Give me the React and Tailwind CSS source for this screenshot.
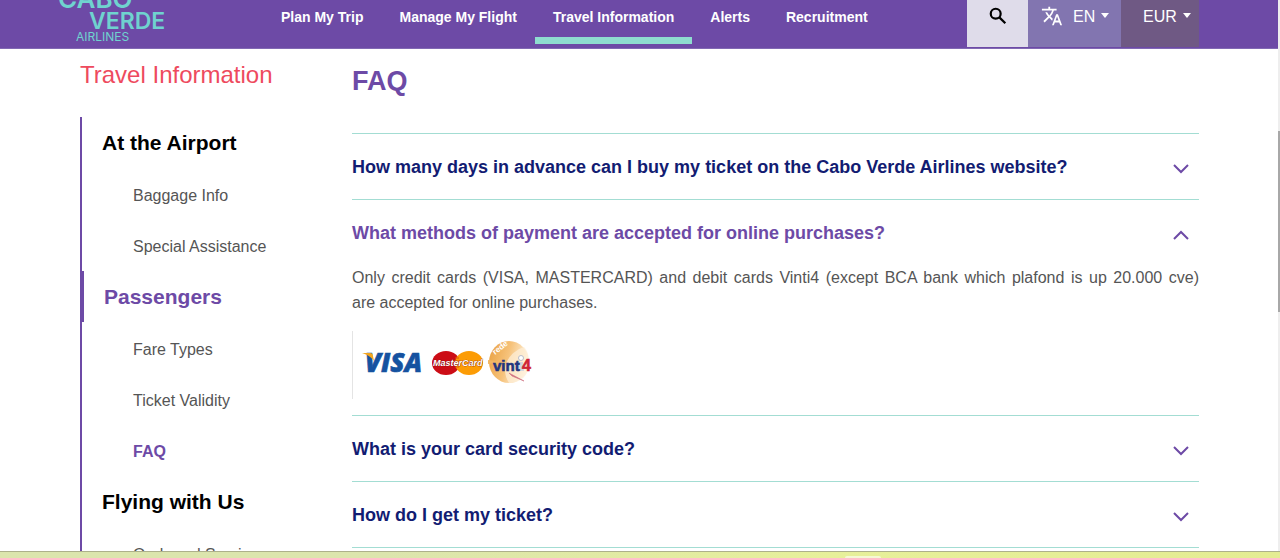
import { useState } from 'react';

const NAV_ITEMS = ['Plan My Trip', 'Manage My Flight', 'Travel Information', 'Alerts', 'Recruitment'];

const SECTIONS = [
  { title: 'At the Airport', links: ['Baggage Info', 'Special Assistance'] },
  { title: 'Passengers', links: ['Fare Types', 'Ticket Validity', 'FAQ'] },
  { title: 'Flying with Us', links: ['On-board Services'] },
];

const QUESTIONS = [
  'How many days in advance can I buy my ticket on the Cabo Verde Airlines website?',
  'What methods of payment are accepted for online purchases?',
  'What is your card security code?',
  'How do I get my ticket?',
];

function Logo() {
  return (
    <svg width="110" height="42" viewBox="0 0 110 42" className="block" role="img" aria-label="Cabo Verde Airlines" fill="#6fd3cf" fontFamily="Inter, sans-serif">
      <text x="0" y="8" fontSize="26" fontWeight="600">CABO</text>
      <text x="31" y="29" fontSize="23" fontWeight="600">VERDE</text>
      <text x="18" y="41" fontSize="12">AIRLINES</text>
    </svg>
  );
}

function Caret() {
  return (
    <svg width="8" height="5" viewBox="0 0 8 5" className="pointer-events-none -ml-2 mb-1 shrink-0" aria-hidden="true">
      <path d="M0 0h8L4 5z" fill="white" />
    </svg>
  );
}

function Header() {
  return (
    <header className="flex h-[49px] shrink-0 border-b border-[#8169b3] bg-[#6d4aa6] pr-[79px] pl-[58px]">
      <a href="#home" className="w-[205px] shrink-0">
        <Logo />
      </a>
      <nav className="flex flex-1">
        {NAV_ITEMS.map((item) => (
          <a
            key={item}
            href="#nav"
            className={`h-11 px-[18px] pt-[7px] text-sm leading-5 font-bold whitespace-nowrap text-white ${
              item === 'Travel Information' ? 'border-b-7 border-[#8edccf]' : ''
            }`}
          >
            {item}
          </a>
        ))}
      </nav>
      <div className="flex h-[47px] shrink-0 text-base text-white">
        <button type="button" aria-label="Search" className="flex w-[61px] items-start justify-center bg-[#dfdcea] pt-[5px]">
          <svg width="22" height="22" viewBox="0 0 24 24" fill="none" stroke="black" strokeWidth="2.4" aria-hidden="true">
            <circle cx="9.5" cy="9.5" r="5.4" />
            <path d="M13.5 13.5L20 20" />
          </svg>
        </button>
        <div className="flex w-[93px] items-start bg-[#8275b0] pt-[5px] pl-[13px]">
          <svg width="22" height="22" viewBox="0 0 24 24" fill="white" className="shrink-0" aria-hidden="true">
            <path d="M12.87 15.07l-2.54-2.51.03-.03A17.52 17.52 0 0 0 14.07 6H17V4h-7V2H8v2H1v1.99h11.17C11.5 7.92 10.44 9.75 9 11.35 8.07 10.32 7.3 9.19 6.69 8h-2c.73 1.63 1.73 3.17 2.98 4.56l-5.09 5.02L4 19l5-5 3.11 3.11.76-2.04zM18.5 10h-2L12 22h2l1.12-3h4.75L21 22h2l-4.5-12zm-2.62 7l1.62-4.33L19.12 17h-3.24z" />
          </svg>
          <div className="flex h-6 items-center pl-[10px]">
            <select aria-label="Language" className="w-9 appearance-none bg-transparent">
              <option>EN</option>
            </select>
            <Caret />
          </div>
        </div>
        <div className="flex w-[78px] items-start bg-[#6f5984] pt-[5px] pl-[22px]">
          <div className="flex h-6 items-center">
            <select aria-label="Currency" className="w-12 appearance-none bg-transparent">
              <option>EUR</option>
            </select>
            <Caret />
          </div>
        </div>
      </div>
    </header>
  );
}

function Sidebar() {
  return (
    <aside className="w-[272px] shrink-0">
      <h2 className="pt-3 text-2xl leading-7 text-[#ee4a5e]">Travel Information</h2>
      <nav className="mt-7 border-l-2 border-[#6d4aa6]">
        {SECTIONS.map(({ title, links }) => (
          <div key={title}>
            <h3
              className={`h-[51px] pl-5 text-[21px] leading-[51px] font-bold ${
                title === 'Passengers' ? 'border-l-2 border-[#6d4aa6] text-[#6d4aa6]' : 'text-black'
              }`}
            >
              {title}
            </h3>
            <ul className="pt-px">
              {links.map((link) => (
                <li key={link} className="h-[51px]">
                  <a
                    href="#page"
                    className={`block pl-[51px] text-base leading-[53px] ${
                      link === 'FAQ' ? 'font-bold text-[#6d4aa6]' : 'text-[#555555]'
                    }`}
                  >
                    {link}
                  </a>
                </li>
              ))}
            </ul>
          </div>
        ))}
      </nav>
    </aside>
  );
}

function PaymentCards() {
  return (
    <svg width="190" height="68" viewBox="0 0 190 68" className="block" role="img" aria-label="Visa, MasterCard, Vinti4" fontFamily="Liberation Sans, Arial, sans-serif">
      <defs>
        <linearGradient id="globe" x1="0" y1="0.3" x2="1" y2="0.6">
          <stop offset="0" stopColor="#eba548" />
          <stop offset="0.45" stopColor="#f6c27a" />
          <stop offset="0.8" stopColor="#fce6c4" />
          <stop offset="1" stopColor="#ffffff" />
        </linearGradient>
      </defs>
      <path d="M0.5 0v68" stroke="#e4e4e4" />
      <text x="13" y="41" fontFamily="Open Sans, sans-serif" fontSize="26" fontWeight="800" fontStyle="italic" fill="#1552a0" stroke="#1552a0" strokeWidth="0.6">VISA</text>
      <path d="M10 22h8c2 0 3 1 3 3l1 5c-3-4-6-6-12-8z" fill="#f3a51d" />
      <ellipse cx="94" cy="32" rx="14" ry="12" fill="#cc0d16" />
      <ellipse cx="117" cy="32" rx="14" ry="12" fill="#fc9c05" />
      <path d="M103 27h4M102 30h6M102 33h6M103 36h4" stroke="#e0530e" />
      <text x="81" y="35" fontSize="9" fontWeight="700" fontStyle="italic" fill="white" stroke="#7c1410" strokeWidth="0.6" paintOrder="stroke">MasterCard</text>
      <ellipse cx="157" cy="31" rx="20" ry="21" fill="url(#globe)" />
      <path d="M157 52c-9-14-2-30 15-36 5 5 6 15 4 23-2 7-9 13-19 13z" fill="#fdeed6" opacity="0.75" />
      <path d="M136 29l14 2-14 2z" fill="#f1b765" />
      <text x="143" y="24" fontSize="8" fontWeight="700" fill="white" transform="rotate(-38 143 24)">rede</text>
      <path d="M166 31h5l1 9h-8z" fill="#d4d5dd" />
      <circle cx="169" cy="27" r="2.5" fill="#ffffff" stroke="#b9bcc9" />
      <text x="141" y="40" fontSize="15" fontWeight="700" fill="#22357e" stroke="#22357e" strokeWidth="0.6">vint</text>
      <text x="170" y="40" fontSize="16" fontWeight="700" fill="#cf2435" stroke="#cf2435" strokeWidth="0.6">4</text>
      <path d="M157 42l15 8-12-5z" fill="#cf7080" stroke="#cf7080" strokeWidth="0.6" />
    </svg>
  );
}

function Chevron({ up }) {
  return (
    <svg width="16" height="10" viewBox="0 0 16 10" className={`mt-1 mr-[10px] shrink-0 ${up ? 'rotate-180' : ''}`} fill="none" stroke="#6d4aa6" strokeWidth="2" aria-hidden="true">
      <path d="M1 1l7 7 7-7" />
    </svg>
  );
}

export default function App() {
  const [open, setOpen] = useState(1);

  return (
    <div className="flex h-screen flex-col overflow-hidden bg-white font-['Liberation_Sans',Arial,sans-serif]">
      <div className="flex min-h-0 flex-1">
        <div className="flex min-w-0 flex-1 flex-col">
          <Header />
          <div className="flex min-h-0 flex-1 overflow-hidden pr-[79px] pl-20">
            <Sidebar />
            <main className="min-w-0 flex-1">
              <h1 className="pt-4 pb-9 text-[27px] leading-8 font-bold text-[#6d4aa6]">FAQ</h1>
              {QUESTIONS.map((question, i) => (
                <section key={question} className="border-t border-[#a3ddd3] last:border-b">
                  <h2>
                    <button
                      type="button"
                      aria-expanded={open === i}
                      onClick={() => setOpen(open === i ? -1 : i)}
                      className={`flex h-[65px] w-full items-center justify-between text-left text-lg font-bold ${
                        open === i ? 'text-[#6d4aa6]' : 'text-[#121c72]'
                      }`}
                    >
                      {question}
                      <Chevron up={open === i} />
                    </button>
                  </h2>
                  {open === i && (
                    <div className="pb-4 text-base leading-[25px] text-[#555555]">
                      <p>
                        <span className="block [text-align-last:justify]">
                          Only credit cards (VISA, MASTERCARD) and debit cards Vinti4 (except BCA bank which plafond is up 20.000 cve)
                        </span>
                        are accepted for online purchases.
                      </p>
                      <div className="mt-4">
                        <PaymentCards />
                      </div>
                    </div>
                  )}
                </section>
              ))}
            </main>
          </div>
        </div>
        <div className="w-[2px] shrink-0 bg-[#eeeeee] pt-[131px]">
          <div className="h-[181px] bg-[#a8a8a8]" />
        </div>
      </div>
      <footer className="h-[7px] shrink-0 border-t border-[#adb08b] bg-linear-to-r from-[#dce5ad] from-30% via-[#e7f09a] via-65% to-[#e4ec92] pt-1">
        <div className="ml-[66%] h-[2px] w-9 rounded-t-sm bg-[#f5f8d4]" />
      </footer>
    </div>
  );
}
